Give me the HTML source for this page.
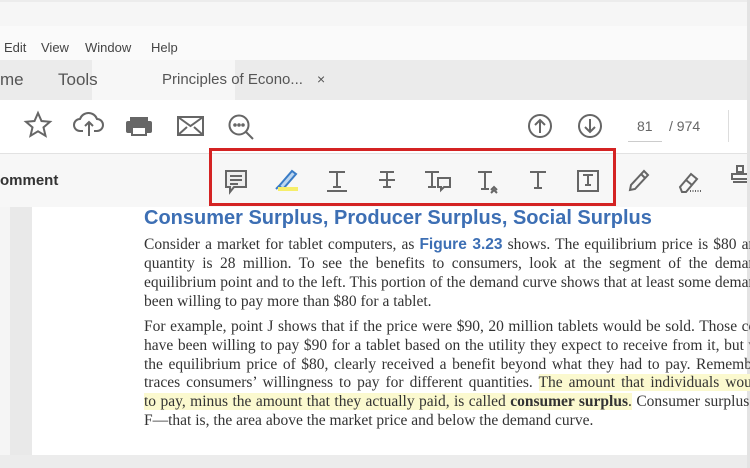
<!DOCTYPE html>
<html><head><meta charset="utf-8"><style>
*{margin:0;padding:0;box-sizing:border-box}
body{width:750px;height:468px;overflow:hidden;background:#ececec;position:relative;font-family:"Liberation Sans",sans-serif;color:#444}
.a{position:absolute}
.ln{position:absolute;left:144px;width:620px;white-space:nowrap;font-family:"Liberation Serif",serif;font-size:15.5px;color:#333;text-align:justify;text-align-last:justify;line-height:18px}
.ln.l{text-align-last:left}
.hl{background:#fbf9cf}
svg{position:absolute;overflow:visible}
</style></head><body>
<div class="a" style="left:0;top:2px;width:750px;height:24px;background:#f6f6f6"></div>
<div class="a" style="left:0;top:26px;width:750px;height:34px;background:#fafafa"></div>
<div class="a" style="left:4px;top:40px;font-size:13px;color:#444">Edit</div>
<div class="a" style="left:41px;top:40px;font-size:13px;color:#444">View</div>
<div class="a" style="left:85px;top:40px;font-size:13px;color:#444">Window</div>
<div class="a" style="left:151px;top:40px;font-size:13px;color:#444">Help</div>
<div class="a" style="left:0;top:60px;width:750px;height:40px;background:#ebebeb"></div>
<div class="a" style="left:92px;top:60px;width:143px;height:40px;background:#f7f7f7"></div>
<div class="a" style="left:0;top:70px;font-size:17px;color:#555">me</div>
<div class="a" style="left:58px;top:70px;font-size:17px;color:#555">Tools</div>
<div class="a" style="left:162px;top:71px;font-size:15px;color:#555">Principles of Econo...</div>
<div class="a" style="left:317px;top:71px;font-size:14px;color:#555">×</div>
<div class="a" style="left:0;top:100px;width:750px;height:53px;background:#fff"></div>
<div class="a" style="left:0;top:153px;width:750px;height:1px;background:#e2e2e2"></div>
<svg style="left:0;top:0" width="750" height="160" fill="none" stroke="#666" stroke-width="2">
<path d="M38 113l3.5 8 8.5 .8-6.5 5.6 2 8.4-7.5-4.5-7.5 4.5 2-8.4-6.5-5.6 8.5-.8z"/>
<path d="M83 131h-3a6 6 0 0 1 0-12 9 9 0 0 1 17 0 6 6 0 0 1 0 12h-3M89 136v-14M85 126l4-4 4 4"/>
<rect x="130" y="117" width="18" height="5" fill="#666" stroke="none"/><rect x="126" y="121" width="26" height="12" rx="2" fill="#666" stroke="none"/><rect x="132" y="127" width="14" height="8" fill="#fff" stroke="#666"/>
<rect x="178" y="117" width="25" height="18"/><path d="M178 117l12.5 9 12.5-9M178 135l9-8M203 135l-9-8"/>
<circle cx="239" cy="125" r="9.5"/><path d="M246 132l7 7"/><circle cx="235" cy="125" r=".8" fill="#666"/><circle cx="239" cy="125" r=".8" fill="#666"/><circle cx="243" cy="125" r=".8" fill="#666"/>
<circle cx="540" cy="126" r="11"/><path d="M540 133v-13M535 125l5-5 5 5"/>
<circle cx="590" cy="126" r="11"/><path d="M590 119v13M585 127l5 5 5-5"/>
</svg>
<div class="a" style="left:637px;top:118px;font-size:14px;color:#666">81</div>
<div class="a" style="left:628px;top:141px;width:34px;height:1px;background:#ccc"></div>
<div class="a" style="left:669px;top:118px;font-size:14px;color:#666">/ 974</div>
<div class="a" style="left:728px;top:110px;width:1px;height:32px;background:#ddd"></div>
<div class="a" style="left:0;top:154px;width:750px;height:53px;background:#f7f7f7"></div>
<div class="a" style="left:0;top:172px;font-size:15px;font-weight:bold;color:#333">omment</div>
<svg style="left:0;top:0" width="750" height="210" fill="none" stroke="#666" stroke-width="2">
<path d="M226 171h20v16h-12l-4 5v-5h-4z" fill="#eee"/><path d="M230 176h12M230 180h12M230 184h8"/>
<path d="M279 186l13-15 4 3-13 15z" fill="#bcd6f0" stroke="#3a7cc6"/><path d="M276 189l3-3" stroke="#3a7cc6"/><rect x="278" y="187" width="20" height="4" fill="#f6ee6a" stroke="none"/>
<path d="M329 172h16M337 172v15M333 187h8M327 191h20"/>
<path d="M380 172h14M387 172v15M383 187h8M379 180h16"/>
<path d="M425 172h14M432 172v15M428 187h8"/><path d="M438 178h12v9h-6l-3 3v-3h-3z"/>
<path d="M478 172h14M485 172v17M481 189h8M491 190l3-3 3 3M491 193l3-3 3 3"/>
<path d="M530 172h16M538 172v16M534 188h8"/>
<rect x="578" y="171" width="20" height="20"/><path d="M583 175h10M588 175v10M585 185h6"/>
<path d="M630 190l1-5 13-14 4 4-13 14z"/><path d="M641 174l4 4"/>
<path d="M680 187l11-13 6 5-11 13h-4zM686 180l6 5"/><path d="M690 191h12" stroke-dasharray="1 1.5"/>
<path d="M737 166h6v6h-6zM732 174h16v5h-16zM733 182h15"/>
</svg>
<div class="a" style="left:209px;top:148px;width:407px;height:58px;border:3px solid #d42323;"></div>
<div class="a" style="left:0;top:207px;width:750px;height:248px;background:#fff"></div>
<div class="a" style="left:10px;top:207px;width:22px;height:248px;background:#e9e9e9"></div>
<div class="a" style="left:0;top:207px;width:10px;height:248px;background:#f5f5f5"></div>
<div class="a" style="left:747px;top:0;width:3px;height:468px;background:#e3e3e3"></div>
<div class="a" style="left:144px;top:207px;font-size:20px;font-weight:bold;color:#3d6fb4;white-space:nowrap">Consumer Surplus, Producer Surplus, Social Surplus</div>
<div class="ln" style="top:236px">Consider a market for tablet computers, as <b style="font-family:'Liberation Sans',sans-serif;color:#3d6fb4;font-size:15.5px">Figure 3.23</b> shows. The equilibrium price is $80 and</div>
<div class="ln" style="top:255px">quantity is 28 million. To see the benefits to consumers, look at the segment of the demand</div>
<div class="ln" style="top:274px">equilibrium point and to the left. This portion of the demand curve shows that at least some demand</div>
<div class="ln l" style="top:293px">been willing to pay more than $80 for a tablet.</div>
<div class="ln" style="top:318px">For example, point J shows that if the price were $90, 20 million tablets would be sold. Those con</div>
<div class="ln" style="top:337px">have been willing to pay $90 for a tablet based on the utility they expect to receive from it, but wi</div>
<div class="ln" style="top:356px">the equilibrium price of $80, clearly received a benefit beyond what they had to pay. Remember</div>
<div class="ln" style="top:374px">traces consumers’ willingness to pay for different quantities. <span class="hl">The amount that individuals would</span></div>
<div class="ln" style="top:393px"><span class="hl">to pay, minus the amount that they actually paid, is called <b>consumer surplus</b>.</span> Consumer surplus is</div>
<div class="ln l" style="top:412px">F—that is, the area above the market price and below the demand curve.</div>
</body></html>
